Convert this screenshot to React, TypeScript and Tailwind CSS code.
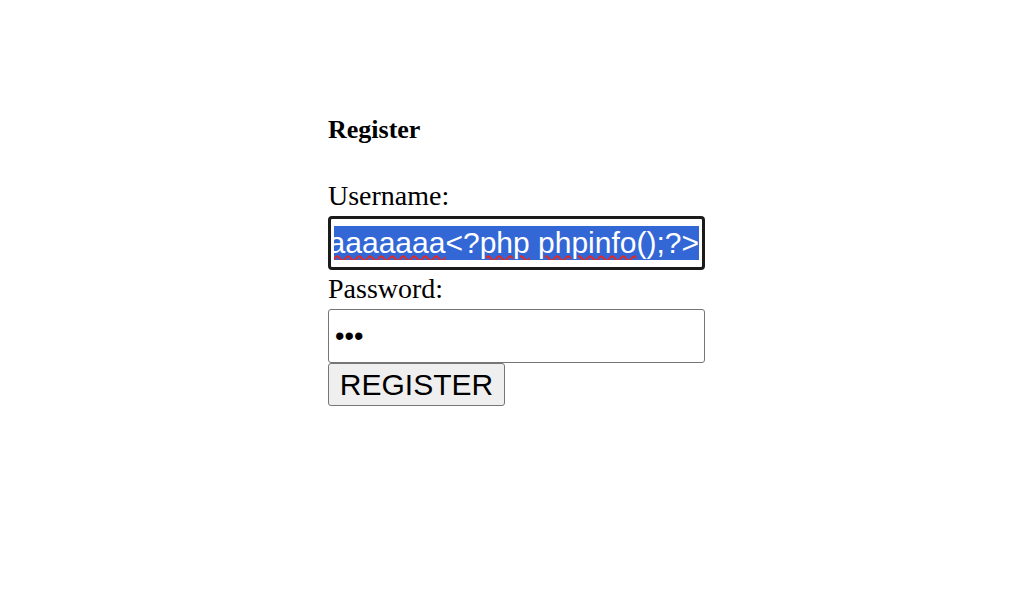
export default function App() {
  return (
    <div className="w-full h-[600px] bg-white pl-[328px] pt-[114px] text-black">
      <form className="flex flex-col items-start" onSubmit={(e) => e.preventDefault()}>
        <h3 className="text-[26px] leading-[32px] font-bold font-['Liberation_Serif',serif]">Register</h3>

        <label className="mt-[33px] text-[28px] leading-[34px] font-['Liberation_Serif',serif]">Username:</label>
        {/* focused input with selected text */}
        <div className="mt-[3px] w-[377px] h-[54px] border-[3px] border-[#1b1b1b] rounded-[4px] bg-white px-[3px] flex items-center font-['Liberation_Sans',Arial,sans-serif] text-[30px] leading-[34px]">
          <div className="flex-1 flex justify-end overflow-hidden">
            <span className="shrink-0 whitespace-nowrap bg-[#3367d6] text-white">
              <span className="underline decoration-wavy decoration-[#e8261f] decoration-[1.5px] underline-offset-[2px]">aaaaaaa</span>
              &lt;?<span className="underline decoration-wavy decoration-[#e8261f] decoration-[1.5px] underline-offset-[2px]">php</span>{' '}
              <span className="underline decoration-wavy decoration-[#e8261f] decoration-[1.5px] underline-offset-[2px]">phpinfo</span>();?&gt;
            </span>
          </div>
        </div>

        <label className="mt-[2px] text-[28px] leading-[34px] font-['Liberation_Serif',serif]">Password:</label>
        <div className="mt-[3px] w-[377px] h-[54px] border border-[#767676] rounded-[3px] bg-white px-[6px] flex items-center font-['Liberation_Sans',Arial,sans-serif] text-[27px] leading-[34px]">
          <span>•••</span>
        </div>

        <button
          type="submit"
          className="w-[177px] h-[43px] border border-[#767676] rounded-[3px] bg-[#efefef] flex items-center justify-center font-['Liberation_Sans',Arial,sans-serif] text-[30px] leading-[34px]"
        >
          REGISTER
        </button>
      </form>
    </div>
  );
}
